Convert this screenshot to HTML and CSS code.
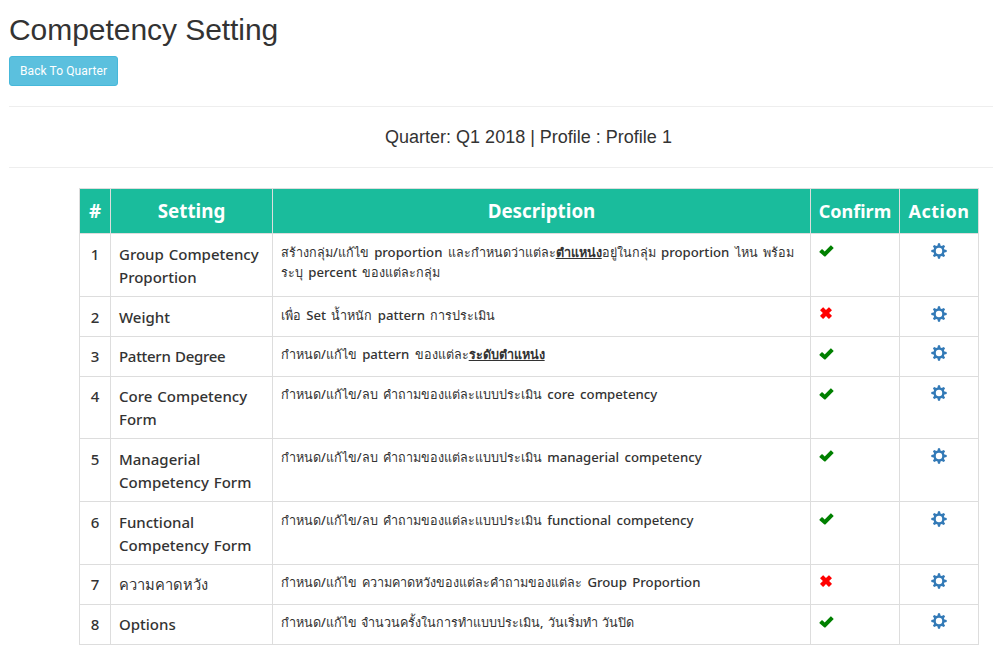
FILE: index.html
```html
<!DOCTYPE html>
<html lang="th">
<head>
<meta charset="utf-8">
<title>Competency Setting</title>
<link rel="stylesheet" href="styles.css">
</head>
<body>
<svg class="defs" aria-hidden="true">
<symbol id="ok" viewBox="0 0 15 12"><path d="M12.2.4 14.5 2.7Q14.8 3 14.5 3.3L6.4 11.4Q5.9 11.8 5.4 11.4L.5 7.2Q.2 6.9.5 6.6L2.7 4.3Q3 4 3.4 4.3L5.7 6.5 11.6.4Q11.9.1 12.2.4Z"/></symbol>
<symbol id="no" viewBox="0 0 12 12"><path d="M.2 3 2.8.4Q3.1.1 3.5.5L6 3.1 8.6.5Q8.9.1 9.3.4L11.8 3Q12 3.3 11.7 3.6L9.1 6.1 11.7 8.6Q12 8.9 11.7 9.2L9.2 11.7Q8.9 12 8.6 11.7L6 9.1 3.5 11.7Q3.1 12 2.8 11.7L.3 9.2Q0 8.9.3 8.6L2.9 6.1.3 3.6Q0 3.3.2 3Z"/></symbol>
<symbol id="cog" viewBox="0 0 16 16"><path fill-rule="evenodd" d="M7 .3Q8 0 9 .3L9.5 2.6 10.7 3.1 12.7 1.9 14.1 3.3 12.9 5.3 13.4 6.5 15.7 7V9L13.4 9.5 12.9 10.7 14.1 12.7 12.7 14.1 10.7 12.9 9.5 13.4 9 15.7Q8 16 7 15.7L6.5 13.4 5.3 12.9 3.3 14.1 1.9 12.7 3.1 10.7 2.6 9.5.3 9V7L2.6 6.5 3.1 5.3 1.9 3.3 3.3 1.9 5.3 3.1 6.5 2.6ZM8 4.8A3.2 3.2 0 1 0 8 11.2 3.2 3.2 0 1 0 8 4.8Z"/></symbol>
</svg>
<h2>Competency Setting</h2>
<a class="btn">Back To Quarter</a>
<hr>
<h4>Quarter: Q1 2018 | Profile : Profile 1</h4>
<hr>
<table>
<colgroup><col class="c1"><col class="c2"><col class="c3"><col class="c4"><col class="c5"></colgroup>
<thead><tr><th class="wide">#</th><th class="wide">Setting</th><th class="wide">Description</th><th>Confirm</th><th class="action">Action</th></tr></thead>
<tbody>
<tr class="tall"><td class="num">1</td><td class="name">Group Competency<br>Proportion</td><td class="desc">สร้างกลุ่ม/แก้ไข <i>proportion</i> และกำหนดว่าแต่ละ<b>ตำแหน่ง</b>อยู่ในกลุ่ม <i>proportion</i> ไหน พร้อม<br>ระบุ <i>percent</i> ของแต่ละกลุ่ม</td><td><svg class="ok"><use href="#ok"/></svg></td><td class="act"><svg class="cog"><use href="#cog"/></svg></td></tr>
<tr><td class="num">2</td><td class="name">Weight</td><td class="desc">เพื่อ <i>Set</i> น้ำหนัก <i>pattern</i> การประเมิน</td><td><svg class="no"><use href="#no"/></svg></td><td class="act"><svg class="cog"><use href="#cog"/></svg></td></tr>
<tr class="up"><td class="num">3</td><td class="name pattern">Pattern Degree</td><td class="desc">กำหนด/แก้ไข <i>pattern</i> ของแต่ละ<b>ระดับตำแหน่ง</b></td><td><svg class="ok"><use href="#ok"/></svg></td><td class="act"><svg class="cog"><use href="#cog"/></svg></td></tr>
<tr class="mid up"><td class="num">4</td><td class="name">Core Competency<br>Form</td><td class="desc">กำหนด/แก้ไข/ลบ คำถามของแต่ละแบบประเมิน <i>core competency</i></td><td><svg class="ok"><use href="#ok"/></svg></td><td class="act"><svg class="cog"><use href="#cog"/></svg></td></tr>
<tr class="tall"><td class="num">5</td><td class="name">Managerial<br>Competency Form</td><td class="desc">กำหนด/แก้ไข/ลบ คำถามของแต่ละแบบประเมิน <i>managerial competency</i></td><td><svg class="ok"><use href="#ok"/></svg></td><td class="act"><svg class="cog"><use href="#cog"/></svg></td></tr>
<tr class="tall"><td class="num">6</td><td class="name">Functional<br>Competency Form</td><td class="desc">กำหนด/แก้ไข/ลบ คำถามของแต่ละแบบประเมิน <i>functional competency</i></td><td><svg class="ok"><use href="#ok"/></svg></td><td class="act"><svg class="cog"><use href="#cog"/></svg></td></tr>
<tr class="up"><td class="num">7</td><td class="name thai">ความคาดหวัง</td><td class="desc">กำหนด/แก้ไข ความคาดหวังของแต่ละคำถามของแต่ละ <i>Group Proportion</i></td><td><svg class="no"><use href="#no"/></svg></td><td class="act"><svg class="cog"><use href="#cog"/></svg></td></tr>
<tr class="up"><td class="num">8</td><td class="name">Options</td><td class="desc last">กำหนด/แก้ไข จำนวนครั้งในการทำแบบประเมิน, วันเริ่มทำ วันปิด</td><td><svg class="ok"><use href="#ok"/></svg></td><td class="act"><svg class="cog"><use href="#cog"/></svg></td></tr>
</tbody>
</table>
</body>
</html>
```
FILE: styles.css
```css
* { box-sizing: border-box; }
body { margin: 0 0 0 9px; padding-top: 13px; height: 657px; overflow: hidden; background: #fff; color: #333; font: 14px/20px "Liberation Sans", Arial, sans-serif; }
.defs { display: none; }
h2 { margin: 0 0 10px; font-size: 30px; line-height: 33px; font-weight: 400; letter-spacing: -.05px; }
.btn { display: block; width: 109px; height: 30px; padding: 5px 0; border: 1px solid #46b8da; border-radius: 3px; background: #5bc0de; color: #fff; font: 12px/18px Roboto, sans-serif; letter-spacing: .1px; text-align: center; }
hr { margin: 20px 0; border: 0; border-top: 1px solid #eee; }
h4 { width: 899px; margin: 0 0 0 70px; font-size: 18px; line-height: 20px; font-weight: 400; text-align: center; }
table { width: 900px; margin-left: 70px; border-collapse: collapse; table-layout: fixed; font-family: "Noto Sans", "Open Sans", sans-serif; }
.c1 { width: 31px; }
.c2 { width: 162px; }
.c3 { width: 538px; }
.c4 { width: 89px; }
.c5 { width: 79px; }
th, td { border: 1px solid #ddd; vertical-align: top; white-space: nowrap; }
th { height: 45px; padding: 0 0 1px; background: #1abc9c; color: #fff; font-size: 18px; line-height: 26px; font-weight: 700; text-align: center; vertical-align: middle; }
.wide { font-size: 18.8px; }
.action { letter-spacing: .5px; }
td { height: 40px; padding: 8px 0 0 8px; }
.mid td { height: 62px; }
.tall td { height: 63px; }
.name, .num { padding-top: 9px; font-size: 15px; line-height: 22.8px; font-weight: 500; }
.name { word-spacing: 1px; }
.name.thai { font-size: 14.7px; }
.name.pattern { letter-spacing: -.3px; }
.num { padding-left: 0; text-align: center; }
.desc { padding-top: 9px; font-size: 12.6px; font-weight: 500; line-height: 20px; word-spacing: 2px; }
.desc i { font-size: 13.2px; font-style: normal; line-height: 1; }
.desc.last { word-spacing: 1px; }
.up td { padding-top: 7px; }
.up .desc { padding-top: 8px; }
.up .name, .up .num { padding-top: 8px; }
b { text-decoration: underline; }
.act { padding-left: 0; text-align: center; }
svg { display: block; }
.ok { width: 15px; height: 12px; margin-top: 3px; fill: green; }
.no { width: 12px; height: 12px; margin: 2px 0 0 1px; fill: red; }
.up .ok { margin-top: 4px; }
.up .no { margin-top: 3px; }
.cog { width: 16px; height: 16px; margin: 1px auto 0; fill: #337ab7; }
```
